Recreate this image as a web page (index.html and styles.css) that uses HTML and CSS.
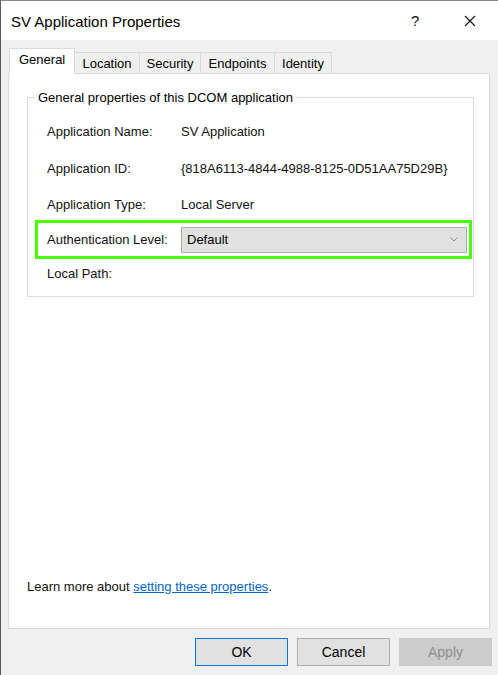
FILE: index.html
```html
<!DOCTYPE html>
<html>
<head>
<meta charset="utf-8">
<link rel="stylesheet" href="styles.css">
</head>
<body>
<div class="window">
  <div class="titlebar">
    <span class="title">SV Application Properties</span>
    <span class="help">?</span>
    <span class="close">
      <svg width="12" height="12" viewBox="0 0 12 12"><path d="M1 1L11 11M11 1L1 11" stroke="#111" stroke-width="1.1" fill="none"/></svg>
    </span>
  </div>
  <div class="body">
    <div class="tabs">
      <div class="tab active">General</div>
      <div class="tab t-loc">Location</div>
      <div class="tab t-sec">Security</div>
      <div class="tab t-end">Endpoints</div>
      <div class="tab t-id">Identity</div>
    </div>
    <div class="panel">
      <fieldset class="group">
        <legend>General properties of this DCOM application</legend>
        <div class="row r1"><span class="lbl">Application Name:</span><span class="val">SV Application</span></div>
        <div class="row r2"><span class="lbl">Application ID:</span><span class="val">{818A6113-4844-4988-8125-0D51AA75D29B}</span></div>
        <div class="row r3"><span class="lbl">Application Type:</span><span class="val">Local Server</span></div>
        <div class="row r4 highlight"><span class="lbl">Authentication Level:</span>
          <div class="select"><span>Default</span>
            <svg width="8" height="5" viewBox="0 0 8 5"><path d="M0.5 0.5L4 4L7.5 0.5" stroke="#888" stroke-width="1" fill="none"/></svg>
          </div>
        </div>
        <div class="row r5"><span class="lbl">Local Path:</span></div>
      </fieldset>
      <div class="spacer"></div>
      <p class="learn">Learn more about <a href="#">setting these properties</a>.</p>
    </div>
    <div class="buttons">
      <button class="btn ok">OK</button>
      <button class="btn">Cancel</button>
      <button class="btn disabled">Apply</button>
    </div>
  </div>
</div>
</body>
</html>
```
FILE: styles.css
```css
html, body {
  margin: 0;
  padding: 0;
  width: 498px;
  height: 675px;
  overflow: hidden;
  background: #f0f0f0;
}
.window {
  box-sizing: border-box;
  width: 498px;
  height: 675px;
  border-left: 1px solid #5a5a5a;
  border-top: 1px solid #8a8a8a;
  background: #f0f0f0;
  font-family: "Liberation Sans", Arial, sans-serif;
  font-size: 13px;
  color: #000;
  display: flex;
  flex-direction: column;
}
.titlebar {
  height: 39px;
  background: #fff;
  display: flex;
  align-items: center;
  flex-shrink: 0;
}
.title {
  font-size: 15px;
  padding-left: 10px;
  flex: 1;
  color: #000;
  margin-top: 1px;
}
.help {
  font-size: 15px;
  width: 14px;
  margin-right: 39px;
  color: #111;
}
.close {
  width: 12px;
  height: 12px;
  margin-right: 22px;
  display: flex;
}
.body {
  flex: 1;
  display: flex;
  flex-direction: column;
  padding: 9px 6px 0 7px;
}
.tabs {
  display: flex;
  align-items: flex-end;
  height: 24px;
  padding-left: 1px;
  position: relative;
  z-index: 1;
}
.tab {
  height: 21px;
  box-sizing: border-box;
  padding: 0;
  line-height: 21px;
  text-align: center;
  border: 1px solid #d9d9d9;
  border-bottom: none;
  border-left: none;
  background: #f0f0f0;
  font-size: 13px;
}
.t-loc { width: 65px; }
.t-sec { width: 61px; }
.t-end { width: 74px; }
.t-id { width: 57px; }
.tab.active {
  height: 26px;
  margin-bottom: -1px;
  background: #fff;
  border-left: 1px solid #d9d9d9;
  padding: 0 9px 0 9px;
  text-align: left;
  line-height: 22px;
  width: 66px;
}
.panel {
  background: #fff;
  border: 1px solid #d9d9d9;
  height: 556px;
  margin-right: 2px;
  box-sizing: border-box;
  display: flex;
  flex-direction: column;
  padding: 0 15px 0 18px;
}
.group {
  margin: 16px 0 0 0;
  border: 1px solid #dcdcdc;
  padding: 13px 0 12px 7px;
  height: 207px;
  box-sizing: border-box;
}
.group legend {
  padding: 0 3px;
  margin-left: 0;
  font-size: 13px;
}
.row {
  display: flex;
  align-items: center;
  height: 26px;
  padding-left: 12px;
  box-sizing: border-box;
}
.lbl {
  width: 134px;
  flex-shrink: 0;
  color: #111;
}
.val {
  color: #111;
}
.r1 { margin-bottom: 11px; }
.r2 { margin-bottom: 10px; }
.r3 { margin-bottom: 3px; }
.highlight {
  height: 39px;
  border: 3px solid #4cff00;
  padding-left: 9px;
  margin-right: 0;
  width: 437px;
  margin-bottom: 1px;
}
.select {
  flex: 1;
  height: 26px;
  margin-right: 2px;
  box-sizing: border-box;
  background: #e1e1e1;
  border: 1px solid #adadad;
  display: flex;
  align-items: center;
  justify-content: space-between;
  padding: 0 8px 0 5px;
}
.spacer { flex: 1; }
.learn {
  margin: 0 0 34px 0;
  color: #111;
}
.learn a {
  color: #0066cc;
  text-decoration: underline;
}
.buttons {
  display: flex;
  justify-content: flex-end;
  gap: 9px;
  margin-top: 9px;
  padding-right: 0;
}
.btn {
  width: 93px;
  height: 28px;
  box-sizing: border-box;
  background: #e1e1e1;
  border: 1px solid #adadad;
  font-family: "Liberation Sans", Arial, sans-serif;
  font-size: 14px;
  color: #000;
  padding: 0;
}
.btn.ok {
  border: 1px solid #0078d7;
}
.btn.disabled {
  background: #cccccc;
  border-color: #cccccc;
  color: #8f8f8f;
}
```
